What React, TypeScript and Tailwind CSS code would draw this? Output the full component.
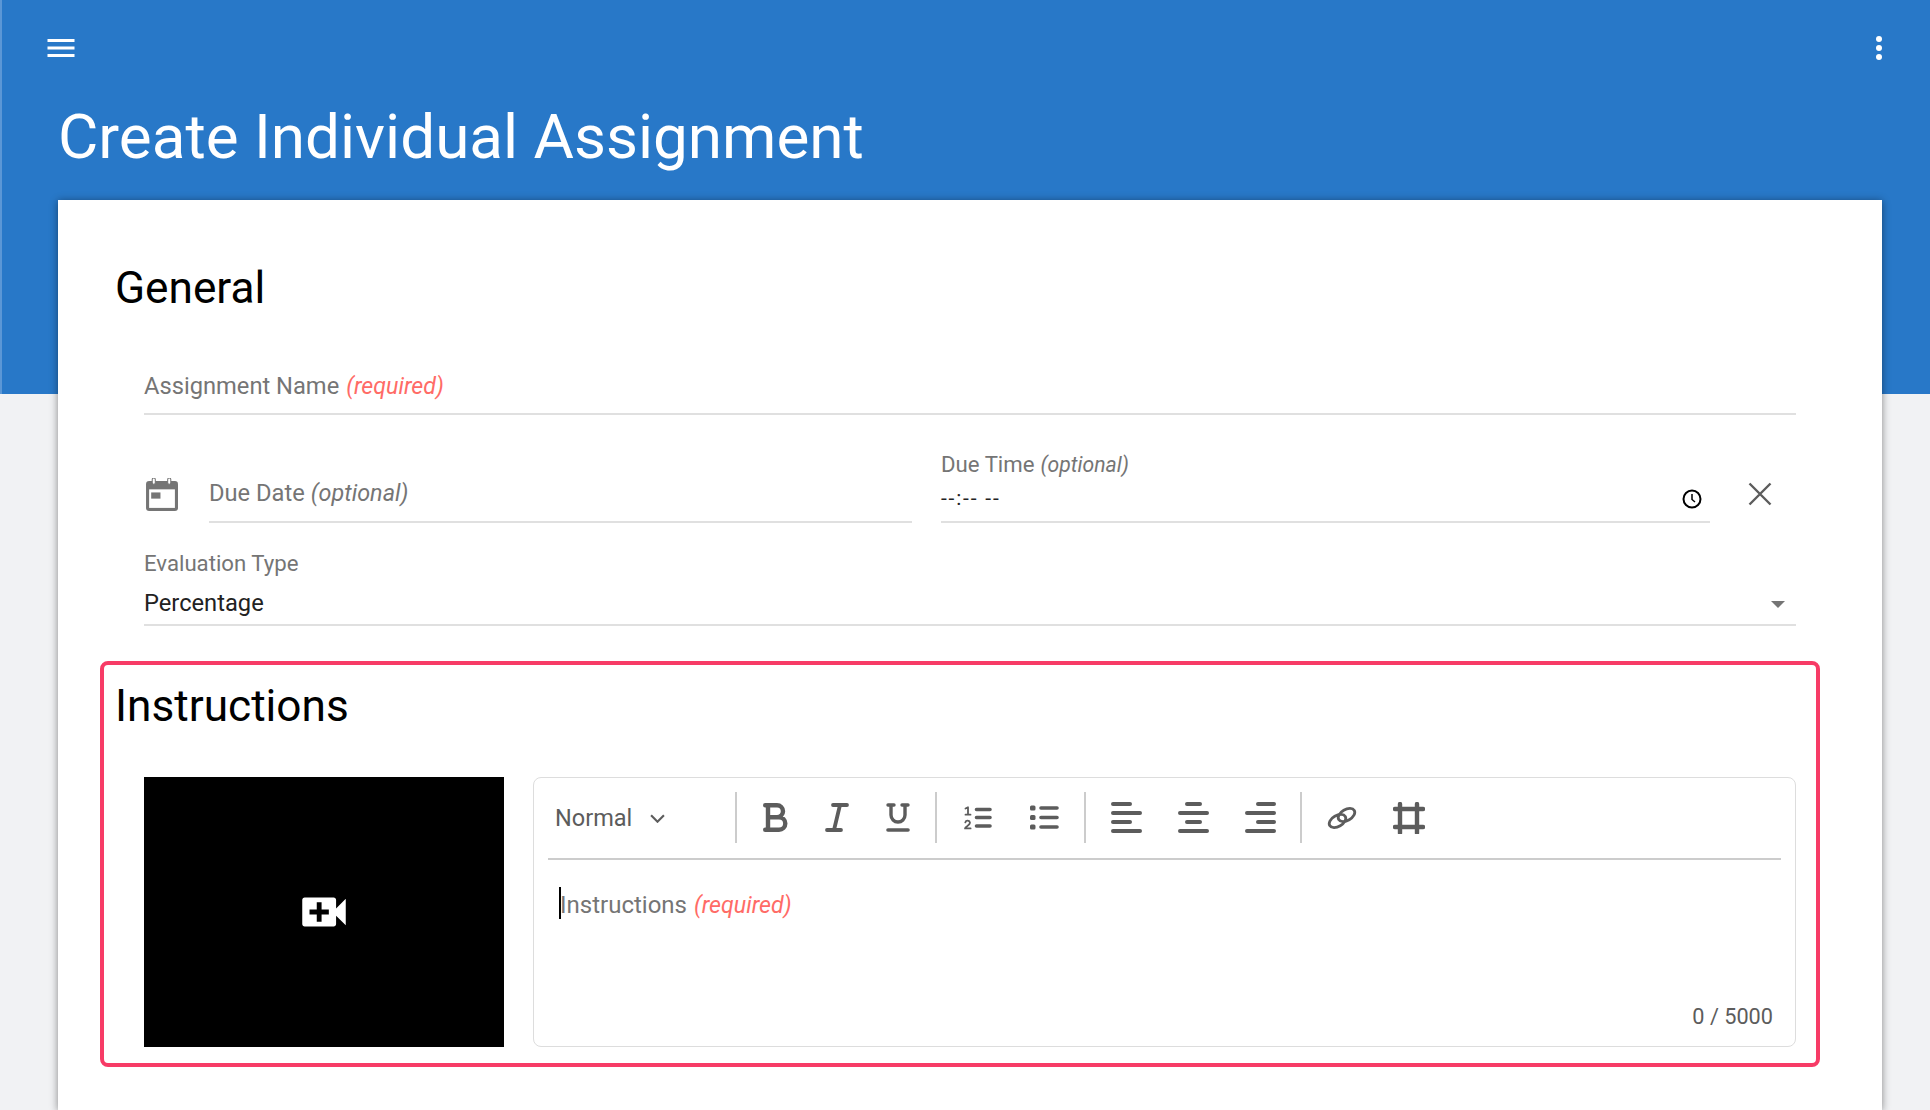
import React from 'react'

const Required = () => <em className="text-[#ff6b66] ml-[7px] text-[23.2px]">(required)</em>
const Optional = ({ className }: { className: string }) => <em className={`ml-[6px] ${className}`}>(optional)</em>

function IconBtn({ w, children }: { w: string; children: React.ReactNode }) {
  return <button className={`${w} h-[51px] flex items-center justify-center shrink-0`}>{children}</button>
}

const Sep = ({ className }: { className: string }) => <div className={`w-[2px] h-[51px] bg-[#cccccc] shrink-0 ${className}`} />

const ALIGN = 'w-[31px] h-[31px] fill-none stroke-[#5c5c5c] stroke-[4px] [stroke-linecap:round]'

function Toolbar() {
  return (
    <div className="mx-[14px] h-[82px] pt-[14px] border-b-2 border-[#cccccc] flex items-start">
      <div className="w-[187px] h-[51px] shrink-0 flex items-center pl-[7px] pt-[2px] text-[23.5px] text-[#5c5c5c]">
        Normal
        <svg viewBox="0 0 14 8" className="w-[15px] h-[9px] ml-[18px] fill-none stroke-[#5c5c5c] stroke-2">
          <path d="M1 1l6 6 6-6" />
        </svg>
      </div>
      <Sep className="mr-[8px]" />
      <IconBtn w="w-[61px]">
        <svg viewBox="0 0 25 29" className="w-[25px] h-[29px] fill-none stroke-[#5c5c5c] stroke-[4.4px] [stroke-linecap:round] [stroke-linejoin:round]">
          <path d="M2.2 2.2H14a6 6 0 0 1 0 12H5M2.2 26.8H16a6.3 6.3 0 0 0 0-12.6H5M5 2.2v24.6" />
        </svg>
      </IconBtn>
      <IconBtn w="w-[61px]">
        <svg viewBox="0 0 24 29" className="w-[24px] h-[29px] fill-none stroke-[#5c5c5c] stroke-[3.8px] [stroke-linecap:round]">
          <path d="M8 2h14M2 27h14M15 2L9 27" />
        </svg>
      </IconBtn>
      <IconBtn w="w-[61px]">
        <svg viewBox="0 0 24 29" className="w-[24px] h-[29px] fill-none stroke-[#5c5c5c] stroke-[3.4px] [stroke-linecap:round]">
          <path d="M2 2h6M16 2h6M5 2v10a7 7 0 0 0 14 0V2" />
          <path d="M2 27h20" className="stroke-[3.6px]" />
        </svg>
      </IconBtn>
      <Sep className="ml-[7px] mr-[7px]" />
      <IconBtn w="w-[67px]">
        <svg viewBox="0 0 28 24" className="w-[28px] h-[24px] fill-none stroke-[#5c5c5c] [stroke-linecap:round] [stroke-linejoin:round]">
          <path d="M12.5 3.5h13.5M12.5 11.5h13.5M12.5 20h13.5" className="stroke-[3.6px]" />
          <path d="M1.5 2.5l2.5-1.2v7.2M1.5 8.7h5" className="stroke-[1.8px]" />
          <path d="M6.6 22.4H1c0-1.8 5-3 5-5.6a2.4 2.4 0 0 0-4.7-.4" className="stroke-[1.8px]" />
        </svg>
      </IconBtn>
      <IconBtn w="w-[67px]">
        <svg viewBox="0 0 29 25" className="w-[29px] h-[25px] fill-none stroke-[#5c5c5c] stroke-[3.6px] [stroke-linecap:round]">
          <path d="M11 3h16M11 12.5h16M11 22h16" />
          <rect x="0" y="0.5" width="5.5" height="5" rx="1.5" className="fill-[#5c5c5c] stroke-0" />
          <rect x="0" y="10" width="5.5" height="5" rx="1.5" className="fill-[#5c5c5c] stroke-0" />
          <rect x="0" y="19.5" width="5.5" height="5" rx="1.5" className="fill-[#5c5c5c] stroke-0" />
        </svg>
      </IconBtn>
      <Sep className="ml-[6px] mr-[7px]" />
      <IconBtn w="w-[67px]">
        <svg viewBox="0 0 31 31" className={ALIGN}>
          <path d="M2 2h17M2 11h27M2 20h17M2 29h27" />
        </svg>
      </IconBtn>
      <IconBtn w="w-[67px]">
        <svg viewBox="0 0 31 31" className={ALIGN}>
          <path d="M2 11h27M2 29h27M9 2h13M9 20h13" />
        </svg>
      </IconBtn>
      <IconBtn w="w-[67px]">
        <svg viewBox="0 0 31 31" className={ALIGN}>
          <path d="M2 11h27M2 29h27M13 2h16M13 20h16" />
        </svg>
      </IconBtn>
      <Sep className="ml-[6px] mr-[6px]" />
      <IconBtn w="w-[67px]">
        <svg viewBox="0 0 32 32" className="w-[32px] h-[32px] fill-none stroke-[#5c5c5c] stroke-[2.8px]">
          <ellipse cx="11.5" cy="19" rx="9" ry="5.5" transform="rotate(-30 11.5 19)" />
          <ellipse cx="20.5" cy="13" rx="9" ry="5.5" transform="rotate(-30 20.5 13)" />
        </svg>
      </IconBtn>
      <IconBtn w="w-[67px]">
        <svg viewBox="0 0 32 32" className="w-[32px] h-[32px] fill-none stroke-[#5c5c5c] stroke-[4.4px] [stroke-linecap:round]">
          <path d="M2 7h28M2 25h28M7 2v29M24 2v29" />
        </svg>
      </IconBtn>
    </div>
  )
}

export default function App() {
  return (
    <div className="h-[1110px] overflow-hidden bg-[linear-gradient(#5b97d6,#5b97d6),linear-gradient(#2878c8_394px,#f1f2f4_394px)] bg-[length:2px_394px,100%_100%] bg-no-repeat font-['Roboto',sans-serif]">
      <div className="h-[200px] flex flex-col">
        <div className="h-[96px] pl-[43px] pr-[33px] pt-[30px] flex justify-between items-start">
          <svg viewBox="0 0 24 24" className="w-[36px] h-[36px] fill-white">
            <path d="M3 18h18v-2H3v2zm0-5h18v-2H3v2zM3 6v2h18V6H3z" />
          </svg>
          <svg viewBox="0 0 24 24" className="w-[36px] h-[36px] fill-white">
            <circle cx="12" cy="6" r="2" />
            <circle cx="12" cy="12" r="2" />
            <circle cx="12" cy="18" r="2" />
          </svg>
        </div>
        <h1 className="pl-[58px] pt-[1px] text-[62px] leading-[80px] text-white">Create Individual Assignment</h1>
      </div>

      <main className="ml-[58px] mr-[48px] bg-white h-[910px] shadow-[0_1px_8px_rgba(0,0,0,0.45)]">
        <section className="pl-[57px] pt-[63px] pr-[86px]">
          <h2 className="text-[44.2px] leading-[50px] text-black">General</h2>
          <div className="ml-[29px]">
            <div className="mt-[48px] h-[54px] border-b-2 border-[#e0e0e0] text-[23.7px] text-[#757575] leading-[50px]">
              Assignment Name<Required />
            </div>

            <div className="flex items-end mt-[36px]">
              <div className="w-[65px] h-[62px] shrink-0 pt-[17px]">
                <svg viewBox="0 0 32 32" className="w-[33px] h-[33px] ml-[1px]">
                  <rect x="1" y="3" width="31" height="29" rx="3" fill="#757575" />
                  <rect x="4" y="11" width="25" height="18" fill="#fff" />
                  <rect x="6" y="14" width="9" height="6" fill="#757575" />
                  <rect x="7" y="0" width="3" height="6" rx="1.5" fill="#fff" stroke="#757575" strokeWidth="1" />
                  <rect x="22" y="0" width="3" height="6" rx="1.5" fill="#fff" stroke="#757575" strokeWidth="1" />
                </svg>
              </div>
              <div className="w-[703px] h-[62px] border-b-2 border-[#e0e0e0] shrink-0 text-[23.7px] text-[#757575] leading-[64px]">
                Due Date<Optional className="text-[23.4px]" />
              </div>
              <div className="ml-[29px] w-[769px] shrink-0 border-b-2 border-[#e0e0e0]">
                <div className="h-[25px] text-[22.2px] leading-[26px] text-[#757575]">
                  Due Time<Optional className="text-[21.2px]" />
                </div>
                <div className="h-[45px] flex items-center justify-between pr-[8px] text-[21px] tracking-[1.8px] text-[#222]">
                  <span>--:-- --</span>
                  <svg viewBox="0 0 20 20" className="w-[20px] h-[20px] fill-none stroke-black stroke-2">
                    <circle cx="10" cy="10" r="8.5" />
                    <path d="M10 5v5.5l3 2.5" className="stroke-[1.5px]" />
                  </svg>
                </div>
              </div>
              <svg viewBox="0 0 24 24" className="w-[24px] h-[24px] ml-[38px] mb-[17px] shrink-0 fill-none stroke-[#5c5c5c] stroke-[2.4px]">
                <path d="M1.5 1.5l21 21M22.5 1.5l-21 21" />
              </svg>
            </div>

            <div className="mt-[27px] text-[22.2px] leading-[26px] text-[#757575]">Evaluation Type</div>
            <div className="h-[50px] pt-[8px] border-b-2 border-[#e0e0e0] flex items-center justify-between pr-[11px] text-[23.7px] text-[#222]">
              <span>Percentage</span>
              <span className="w-0 h-0 border-x-[7.5px] border-x-transparent border-t-[7.5px] border-t-[#757575]" />
            </div>
          </div>
        </section>

        <section className="mt-[35px] ml-[42px] mr-[62px] h-[406px] border-4 border-[#f73b66] rounded-[8px] pl-[11px] pr-[20px]">
          <h2 className="pt-[16px] text-[44.2px] leading-[50px] text-black">Instructions</h2>
          <div className="mt-[46px] ml-[29px] flex gap-[29px]">
            <div className="w-[360px] h-[270px] bg-black flex items-center justify-center shrink-0">
              <svg viewBox="0 0 24 24" className="w-[58px] h-[58px] fill-white">
                <path d="M17 10.5V7c0-.55-.45-1-1-1H4c-.55 0-1 .45-1 1v10c0 .55.45 1 1 1h12c.55 0 1-.45 1-1v-3.5l4 4v-11l-4 4zM14 13h-3v3H9v-3H6v-2h3V8h2v3h3v2z" />
              </svg>
            </div>
            <div className="flex-1 h-[270px] border border-[#dddddd] rounded-[8px] flex flex-col">
              <Toolbar />
              <div className="pl-[25px] pt-[27px] flex-1">
                <div className="flex items-center h-[32px] pt-[4px] text-[24px] text-[#757575]">
                  <span className="w-[2px] h-[32px] -mt-[4px] bg-black mr-[-1px]" />
                  Instructions<Required />
                </div>
              </div>
              <div className="text-right pr-[22px] pb-[16px] text-[21.7px] leading-[26px] text-[#5c5c5c]">0 / 5000</div>
            </div>
          </div>
        </section>
      </main>
    </div>
  )
}
